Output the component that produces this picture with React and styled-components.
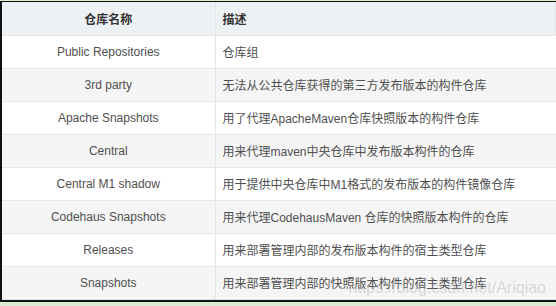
import React from 'react';
import styled, {createGlobalStyle} from 'styled-components';

const GlobalStyle = createGlobalStyle`
    html, body {
        margin: 0;
        padding: 0;
        background: #dcebd4;
    }
    body {
        padding-top: 1px;
        font-family: "Liberation Sans", "Noto Sans CJK SC", sans-serif;
    }
`;

// 截图外框: 左/上/下 黑边, 右边被截掉
const Frame = styled.div`
    position: relative;
    border-top: 1px solid #111;
    border-left: 2px solid #111;
    border-bottom: 2px solid #111;
    background: #fff;
`;

const Table = styled.table`
    width: 100%;
    border-collapse: collapse;
    table-layout: fixed;
    font-size: 12px;
    color: #4f4f4f;
`;

const HeadCell = styled.th`
    box-sizing: border-box;
    height: 33px;
    padding: 0 7px;
    background: #eef1f4;
    color: #333;
    font-weight: bold;
    text-align: ${p => (p.$center ? 'center' : 'left')};
    border-bottom: 1px solid #e3e6e9;
    border-right: 1px solid #e3e6e9;
    width: ${p => p.$width || 'auto'};
`;

const Row = styled.tr`
    background: ${p => (p.$striped ? '#f5f5f5' : '#ffffff')};
`;

const Cell = styled.td`
    height: 32px;
    padding: 0 7px;
    text-align: ${p => (p.$center ? 'center' : 'left')};
    border-bottom: 1px solid #e6e6e6;
    border-right: 1px solid #e6e6e6;
    white-space: nowrap;
    &:last-child {
        border-right: none;
    }
`;

// CSDN 水印, 盖在表格右下角
const Watermark = styled.span`
    position: absolute;
    right: 10px;
    bottom: 4px;
    font-size: 16px;
    line-height: 16px;
    color: rgba(170, 170, 170, 0.4);
    pointer-events: none;
`;

const rows = [
    ['Public Repositories', '仓库组'],
    ['3rd party', '无法从公共仓库获得的第三方发布版本的构件仓库'],
    ['Apache Snapshots', '用了代理ApacheMaven仓库快照版本的构件仓库'],
    ['Central', '用来代理maven中央仓库中发布版本构件的仓库'],
    ['Central M1 shadow', '用于提供中央仓库中M1格式的发布版本的构件镜像仓库'],
    ['Codehaus Snapshots', '用来代理CodehausMaven 仓库的快照版本构件的仓库'],
    ['Releases', '用来部署管理内部的发布版本构件的宿主类型仓库'],
    ['Snapshots', '用来部署管理内部的快照版本构件的宿主类型仓库'],
];

const App = () => {
    return (
        <>
            <GlobalStyle/>
            <Frame>
                <Table>
                    <thead>
                        <tr>
                            <HeadCell $center $width={"213px"}>仓库名称</HeadCell>
                            <HeadCell>描述</HeadCell>
                        </tr>
                    </thead>
                    <tbody>
                        {rows.map(([name, desc], i) => (
                            <Row key={name} $striped={i % 2 === 1}>
                                <Cell $center>{name}</Cell>
                                <Cell>{desc}</Cell>
                            </Row>
                        ))}
                    </tbody>
                </Table>
                <Watermark>https://blog.csdn.net/Ariqiao</Watermark>
            </Frame>
        </>
    );
};

export default App;
